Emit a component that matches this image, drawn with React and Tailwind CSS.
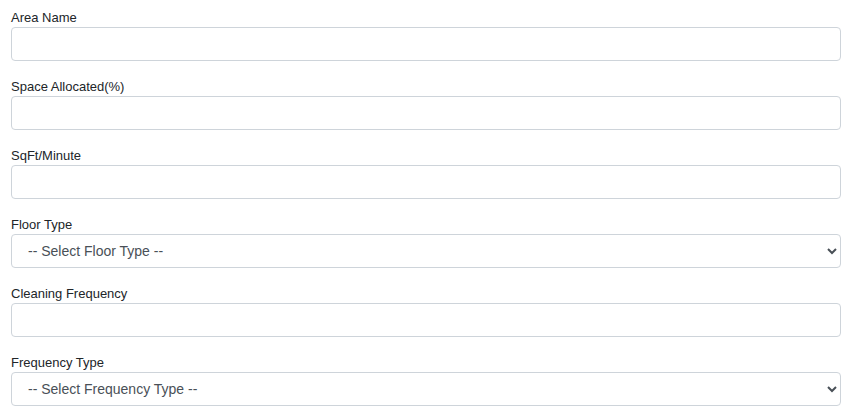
import React, { useState } from 'react';

const fields = [
    { id: 'areaName', label: 'Area Name', type: 'input' },
    { id: 'spaceAllocated', label: 'Space Allocated(%)', type: 'input' },
    { id: 'sqftMinute', label: 'SqFt/Minute', type: 'input' },
    { id: 'floorType', label: 'Floor Type', type: 'select', placeholder: '-- Select Floor Type --' },
    { id: 'cleaningFrequency', label: 'Cleaning Frequency', type: 'input' },
    { id: 'frequencyType', label: 'Frequency Type', type: 'select', placeholder: '-- Select Frequency Type --' },
];

const App = () => {
    const [values, setValues] = useState({});

    const handleChange = (e) => {
        setValues({ ...values, [e.target.name]: e.target.value });
    };

    return (
        <div className="min-h-screen bg-white px-[11px] pt-[11px] font-['Liberation_Sans',Arial,sans-serif]">
            {fields.map((field) => (
                <div key={field.id} className="mb-[19px]">
                    <label htmlFor={field.id} className="mb-[2px] block text-[13px] leading-[14px] text-[#212529]">
                        {field.label}
                    </label>
                    {field.type === 'select' ? (
                        <select
                            id={field.id}
                            name={field.id}
                            value={values[field.id] || ''}
                            onChange={handleChange}
                            className="block h-[34px] w-full rounded-[4px] border border-[#ced4da] bg-white px-3 text-[14px] text-[#495057] focus:outline-none"
                        >
                            <option value="">{field.placeholder}</option>
                        </select>
                    ) : (
                        <input
                            type="text"
                            id={field.id}
                            name={field.id}
                            value={values[field.id] || ''}
                            onChange={handleChange}
                            className="block h-[34px] w-full rounded-[4px] border border-[#ced4da] bg-white px-3 text-[14px] text-[#495057] focus:outline-none"
                        />
                    )}
                </div>
            ))}
        </div>
    );
};

export default App;
